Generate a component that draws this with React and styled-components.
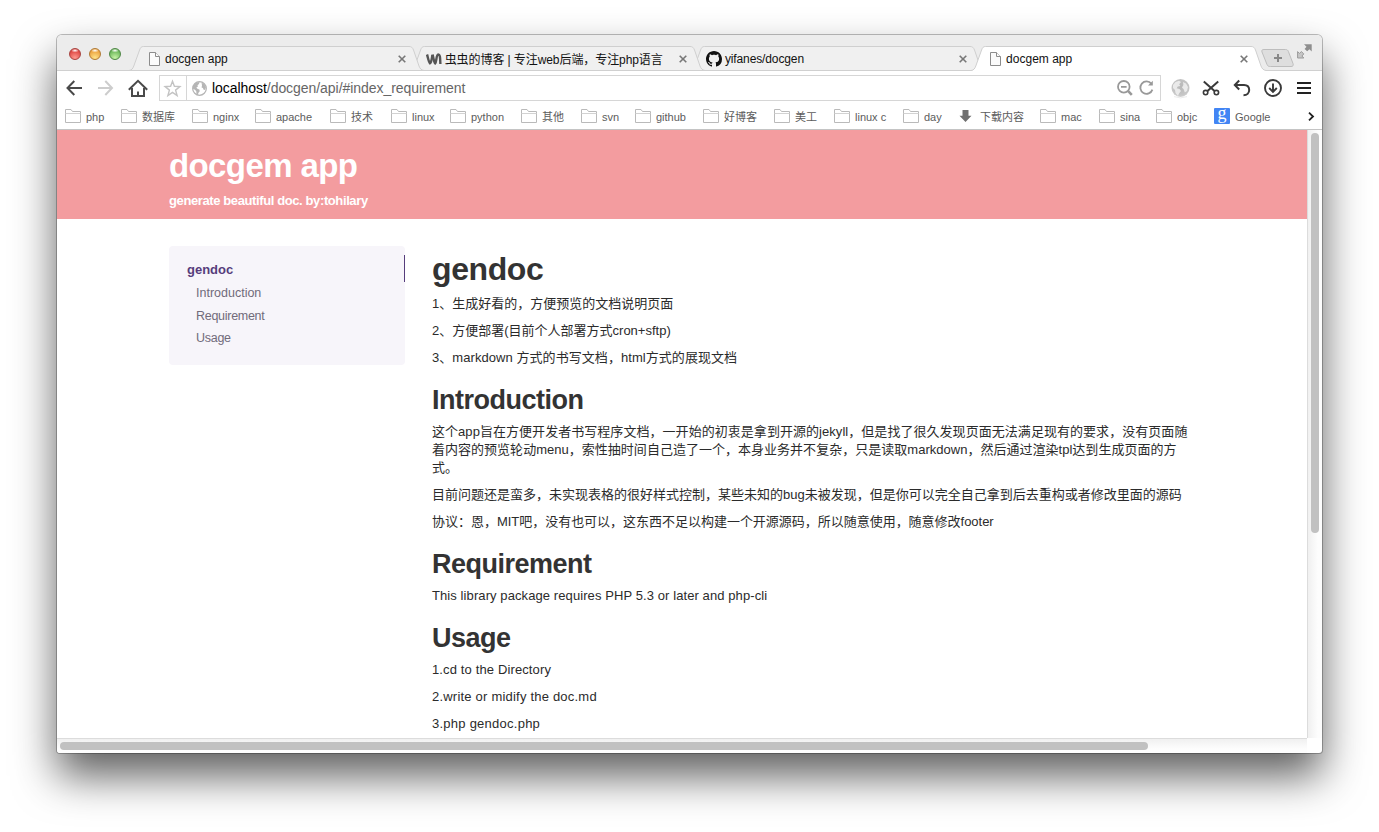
import React from "react";
import styled, { createGlobalStyle } from "styled-components";

const Global = createGlobalStyle`
  html, body { margin: 0; padding: 0; background: #fff; }
  body { width: 1379px; height: 832px; overflow: hidden; font-family: "Liberation Sans", "Noto Sans CJK SC", sans-serif; }
  * { box-sizing: border-box; }
  svg { display: block; flex: none; overflow: visible; }
  h1, h2, p { margin: 0; }
`;

const Desktop = styled.div`
  width: 1379px;
  height: 832px;
  padding: 35px 57px 79px;
`;

const Window = styled.div`
  width: 1265px;
  height: 718px;
  display: flex;
  flex-direction: column;
  background: #fff;
  border-radius: 5px 5px 3px 3px;
  overflow: hidden;
  box-shadow: 0 0 0 1px rgba(0, 0, 0, 0.25), 0 23px 43px rgba(0, 0, 0, 0.63);
`;

const TabStrip = styled.div`
  height: 36px;
  flex: none;
  display: flex;
  align-items: flex-end;
  padding-left: 12px;
  background: #ececec;
  border-bottom: 1px solid #d0d0d0;
`;

const Lights = styled.div`
  display: flex;
  gap: 8px;
  width: 61px;
  padding-bottom: 10px;
`;

const Light = styled.span`
  width: 12px;
  height: 12px;
  border-radius: 50%;
  border: 1px solid ${(p) => p.$edge};
  background: radial-gradient(ellipse 4px 2px at 50% 15%, #fff, transparent),
    radial-gradient(circle at 50% 90%, ${(p) => p.$glow}, ${(p) => p.$core} 75%);
`;

const TabBox = styled.div`
  position: relative;
  z-index: ${(p) => p.$z};
  width: 294px;
  height: 25px;
  flex: none;
  margin: 0 -13.3px -1px 0;
  display: flex;
  align-items: center;
  padding: 0 18px 0 ${(p) => p.$pad}px;
  font-size: 12px;
  color: #111;
  white-space: nowrap;
`;

const TabShape = styled.svg`
  position: absolute;
  left: 0;
  top: 0;
  z-index: -1;
`;

const TabIcon = styled.span`
  width: ${(p) => p.$w}px;
  display: flex;
  align-items: center;
`;

const TabTitle = styled.span`
  flex: 1;
  letter-spacing: ${(p) => p.$ls || 0}px;
`;

const NewTab = styled.div`
  margin: 0 0 3px 8px;
`;

const Expand = styled.div`
  margin: 0 0 11px 3px;
`;

const Toolbar = styled.div`
  height: 34px;
  flex: none;
  display: flex;
  align-items: center;
  padding-left: 9px;
`;

const Tool = styled.div`
  width: ${(p) => p.$w}px;
  flex: none;
`;

const Omnibox = styled.div`
  width: 1002px;
  height: 26px;
  display: flex;
  align-items: center;
  border: 1px solid #d6d6d6;
  margin-right: 10px;
`;

const StarCell = styled.div`
  width: 27px;
  height: 24px;
  display: flex;
  align-items: center;
  padding-left: 4px;
  border-right: 1px solid #d6d6d6;
  margin-right: 5px;
`;

const Url = styled.span`
  flex: 1;
  margin-left: 5px;
  font-size: 14px;
  letter-spacing: -0.05px;
  color: #666;
  b { font-weight: 400; color: #000; }
`;

const OmniTools = styled.div`
  display: flex;
  gap: 6px;
  padding-right: 6px;
`;

const Bookmarks = styled.div`
  height: 25px;
  flex: none;
  display: flex;
  align-items: center;
  padding: 0 0 2px 8px;
  border-bottom: 1px solid #c4c4c4;
`;

const Bookmark = styled.div`
  width: ${(p) => p.$w}px;
  flex: none;
  display: flex;
  align-items: center;
  font-size: 11px;
  color: #5c5c5c;
  white-space: nowrap;
`;

const BookmarkIcon = styled.span`
  width: 21px;
  height: 16px;
  display: flex;
  align-items: center;
`;

const BookmarkLabel = styled.span`
  line-height: 16px;
  padding-top: 2px;
`;

const GoogleBadge = styled.span`
  width: 16px;
  height: 16px;
  border-radius: 1px;
  background: #4285f4;
  color: #fff;
  font: 18px/11px "Liberation Serif", serif;
  text-align: center;
`;

const Body = styled.div`
  flex: 1;
  display: flex;
  min-height: 0;
`;

const Page = styled.div`
  width: 1250px;
  display: flex;
  flex-direction: column;
  overflow: hidden;
`;

const Banner = styled.header`
  height: 89px;
  flex: none;
  padding: 18px 0 0 112px;
  background: #f39c9f;
  color: #fff;
`;

const SiteTitle = styled.h1`
  font-size: 33px;
  line-height: 36px;
  letter-spacing: -0.6px;
`;

const Tagline = styled.p`
  margin-top: 8px;
  font-size: 13px;
  line-height: 18px;
  font-weight: 700;
  letter-spacing: -0.39px;
`;

const Columns = styled.div`
  display: flex;
  padding: 27px 0 0 112px;
`;

const Sidebar = styled.nav`
  width: 236px;
  height: 119px;
  padding-top: 9px;
  background: #f7f5fa;
  border-radius: 4px;
  margin-right: 27px;
`;

const NavHead = styled.div`
  height: 27px;
  line-height: 30px;
  padding-left: 18px;
  border-right: 1px solid #563d7c;
  color: #563d7c;
  font-size: 13px;
  font-weight: 700;
`;

const NavItem = styled.div`
  height: 22.5px;
  line-height: 22px;
  padding-left: 27px;
  color: #716b7a;
  font-size: 12.5px;
  letter-spacing: ${(p) => p.$ls}px;
`;

const Article = styled.article`
  width: 760px;
  padding-top: 3px;
  color: #2b2b2b;
`;

const H1 = styled.h1`
  font-size: 32px;
  line-height: 40px;
  letter-spacing: -0.4px;
  margin-bottom: 6px;
  color: #333;
`;

const H2 = styled.h2`
  font-size: 27px;
  line-height: 32px;
  letter-spacing: -0.5px;
  padding: 8px 0 7px;
  color: #333;
`;

const P = styled.p`
  font-size: 13px;
  line-height: 18px;
  margin-bottom: 9px;
  white-space: nowrap;
  letter-spacing: ${(p) => p.$ls || 0}px;
`;

const Line = styled.span`
  display: block;
  height: 18px;
  letter-spacing: ${(p) => p.$ls || 0}px;
`;

const VBar = styled.div`
  width: 15px;
  padding: 3px 3px 0;
  background: linear-gradient(90deg, #f0f0f0, #fdfdfd 70%);
  border-left: 1px solid #dcdcdc;
`;

const HBar = styled.div`
  width: 1250px;
  height: 15px;
  flex: none;
  padding: 3px 3px 0;
  background: linear-gradient(#f0f0f0, #fdfdfd 70%);
  border-top: 1px solid #dcdcdc;
`;

const Thumb = styled.div`
  width: ${(p) => p.$w}px;
  height: ${(p) => p.$h}px;
  border-radius: 4px;
  background: #c1c1c1;
`;

const PageIcon = () => (
  <svg width="11" height="14" viewBox="0 0 11 14" fill="#fbfbfb" stroke="#8c8c8c">
    <path d="M.5.5H6.5L10.5 4.5V13.5H.5Z" />
    <path d="M6.5.5V4.5H10.5" />
  </svg>
);

const BlogIcon = () => (
  <svg width="16" height="12" viewBox="0 0 16 12" fill="none" stroke="#555" strokeWidth="2.4">
    <path d="M1 1.5C2 4.5 2.6 9 4 10.3C5.4 9.5 6 5 6.4 2" />
    <path d="M6.6 1.5C7.4 4.5 7.8 9 9.2 10.3C10.6 9 10.2 1.6 12.2 1.5C14.6 1.5 14 6 14.4 11" />
  </svg>
);

const GithubIcon = () => (
  <svg width="16" height="16" viewBox="0 0 16 16" fill="#111">
    <path d="M8 0C3.58 0 0 3.58 0 8c0 3.54 2.29 6.53 5.47 7.59.4.07.55-.17.55-.38 0-.19-.01-.82-.01-1.49-2.01.37-2.53-.49-2.69-.94-.09-.23-.48-.94-.82-1.13-.28-.15-.68-.52-.01-.53.63-.01 1.08.58 1.23.82.72 1.21 1.87.87 2.33.66.07-.52.28-.87.51-1.07-1.78-.2-3.64-.89-3.64-3.95 0-.87.31-1.59.82-2.15-.08-.2-.36-1.02.08-2.12 0 0 .67-.21 2.2.82.64-.18 1.32-.27 2-.27s1.36.09 2 .27c1.53-1.04 2.2-.82 2.2-.82.44 1.1.16 1.92.08 2.12.51.56.82 1.27.82 2.15 0 3.07-1.87 3.75-3.65 3.95.29.25.54.73.54 1.48 0 1.07-.01 1.93-.01 2.2 0 .21.15.46.55.38A8 8 0 0 0 16 8c0-4.42-3.58-8-8-8Z" />
  </svg>
);

const CloseIcon = () => (
  <svg width="8" height="8" viewBox="0 0 8 8" stroke="#777" strokeWidth="1.6">
    <path d="M.7.7L7.3 7.3M7.3.7L.7 7.3" />
  </svg>
);

const FolderIcon = () => (
  <svg width="16" height="14" viewBox="0 0 16 14" fill="#fff" stroke="#bababa">
    <path d="M.5 13.5V.5H6L7.5 2.5H15.5V13.5Z" />
    <path d="M.5 4.5H15.5" stroke="#d2d2d2" />
  </svg>
);

const DownIcon = () => (
  <svg width="14" height="14" viewBox="0 0 14 14" fill="#707070">
    <path d="M3.5 1H9.5V6.8H12.5L6.5 13L.5 6.8H3.5Z" />
  </svg>
);

const GlobeIcon = () => (
  <svg width="15" height="15" viewBox="0 0 15 15">
    <circle cx="7.5" cy="7.5" r="6.8" fill="#fff" stroke="#b5b5b5" strokeWidth="1.3" />
    <path fill="#b5b5b5" d="M1 5L4 1.6L7.6 1L7 3L5.5 4.2L6 5.5L4.5 6.2L5 7.6L7.6 8.8L7.6 10.5L6.3 12L6 14L4.5 13L4.2 10L2.5 8.5L1 7.8ZM9.5 1.6L12.5 3.6L13.9 6.5L12.8 9L11.4 8.4L11 7L9.6 6.4L10 4.4Z" />
  </svg>
);

const ShinyGlobe = () => (
  <svg width="19" height="19" viewBox="0 0 19 19">
    <defs>
      <radialGradient id="shine" cx=".5" cy=".4" r=".62">
        <stop offset="0" stopColor="#b8b8b8" />
        <stop offset=".8" stopColor="#c6c6c6" />
        <stop offset="1" stopColor="#d6d6d6" />
      </radialGradient>
    </defs>
    <circle cx="9.5" cy="9" r="9" fill="url(#shine)" />
    <path fill="#f1f1f1" d="M2 6L4.5 3L8 1.8L10 3L8.2 5.2L9.4 7L6.8 7.4L5.6 9.2L8.5 10L10 12L8 14.5L7 17L4.5 14L4 11L2 9ZM12 3L15 4.5L17 8L16 12L13.8 13.4L12.8 10.5L11 8.5L12.4 6Z" opacity=".85" />
    <path d="M3 17.6Q9.5 20.2 16 17.6" fill="none" stroke="#ececec" />
  </svg>
);

const StarIcon = () => (
  <svg width="17" height="17" viewBox="0 0 17 17" fill="none" stroke="#c3c3c3" strokeWidth="1.4">
    <path d="M8.5 1.3L10.4 6.3L15.9 6.6L11.6 10.1L13.1 15.5L8.5 12.4L3.9 15.5L5.4 10.1L1.1 6.6L6.6 6.3Z" />
  </svg>
);

const tabs = [
  { title: "docgen app", icon: <PageIcon />, w: 16, pad: 19, z: 4 },
  { title: "虫虫的博客 | 专注web后端，专注php语言", icon: <BlogIcon />, w: 19, pad: 15, z: 3, ls: -0.08 },
  { title: "yifanes/docgen", icon: <GithubIcon />, w: 18.5, pad: 15, z: 2, ls: -0.12 },
  { title: "docgem app", icon: <PageIcon />, w: 16, pad: 18, z: 5, active: true },
];

const bookmarks = [
  ["php", 56], ["数据库", 71], ["nginx", 63], ["apache", 75], ["技术", 61], ["linux", 59],
  ["python", 71], ["其他", 60], ["svn", 54], ["github", 68], ["好博客", 71], ["美工", 60],
  ["linux c", 69], ["day", 56], ["下载内容", 81, "down"], ["mac", 59], ["sina", 57],
  ["objc", 58], ["Google", 94, "google"],
];

const bookmarkIcons = { down: <DownIcon />, google: <GoogleBadge>g</GoogleBadge> };

function Tab({ title, icon, w, z, pad, ls, active }) {
  return (
    <TabBox $z={z} $pad={pad}>
      <TabShape width="294" height="25" viewBox="0 0 294 25">
        <path
          d="M-1 25C2 24.3 2.8 22.5 3.8 20L9.6 4C10.6 1.5 11.3.5 13.5 .5H279C281.5 .5 282.5 1.5 283.5 4L289 20C290 22.5 291 24 294 24.5V25Z"
          fill={active ? "#fff" : "#f0f0f0"}
        />
        <path
          d="M-1 24.5C2 24 2.8 22.5 3.8 20L9.6 4C10.6 1.5 11.3.5 13.5 .5H279C281.5 .5 282.5 1.5 283.5 4L289 20C290 22.5 291 24 294 24.5"
          fill="none"
          stroke="#cfcfcf"
        />
        {!active && <path d="M0 24.5H294" stroke="#d0d0d0" />}
      </TabShape>
      <TabIcon $w={w}>{icon}</TabIcon>
      <TabTitle $ls={ls}>{title}</TabTitle>
      <CloseIcon />
    </TabBox>
  );
}

export default function App() {
  return (
    <Desktop>
      <Global />
      <Window>
        <TabStrip>
          <Lights>
            <Light $edge="#a8433f" $core="#dd4440" $glow="#ff9a90" />
            <Light $edge="#b07a34" $core="#eba03c" $glow="#ffe48a" />
            <Light $edge="#4e8745" $core="#68b457" $glow="#c8f5a8" />
          </Lights>
          {tabs.map((t, i) => (
            <Tab key={i} {...t} />
          ))}
          <NewTab>
            <svg width="33" height="18" viewBox="0 0 33 18">
              <path d="M3 .5H24.5C26 .5 26.8 1 27.4 2.5L32 14.5C32.7 16.5 32 17.5 30 17.5H9.5C7.5 17.5 6.6 17 6 15.5L1 3C.4 1.4 1 .5 3 .5Z" fill="#dedede" stroke="#bdbdbd" />
              <path d="M17 5V13M13 9H21" stroke="#888" strokeWidth="2" />
            </svg>
          </NewTab>
          <Expand>
            <svg width="15" height="15" viewBox="0 0 15 15">
              <path fill="#8e8e8e" d="M7 .3H14.7V7.5L12.4 5.3L10.2 7.3L7.6 4.9L9.5 2.7Z" />
              <path stroke="#9a9a9a" fill="#c6c6c6" d="M.6 14V7.6L2.4 9.4L4.4 7.6L6.8 9.9L4.9 12L6.8 14Z" />
            </svg>
          </Expand>
        </TabStrip>

        <Toolbar>
          <Tool $w={31}>
            <svg width="16" height="16" viewBox="0 0 16 16" fill="none" stroke="#4a4a4a" strokeWidth="2">
              <path d="M8.3 1L1.5 8L8.3 15M1.5 8H16" />
            </svg>
          </Tool>
          <Tool $w={31}>
            <svg width="16" height="16" viewBox="0 0 16 16" fill="none" stroke="#cdcdcd" strokeWidth="2">
              <path d="M8.3 1L15 8L8.3 15M15 8H1" />
            </svg>
          </Tool>
          <Tool $w={31}>
            <svg width="20" height="18" viewBox="0 0 20 18" fill="none" stroke="#4a4a4a" strokeWidth="2">
              <path d="M.8 10.8L10 1.8L19.2 10.8M4 9V17H16V9" />
              <path d="M10 17V12.5" />
            </svg>
          </Tool>
          <Omnibox>
            <StarCell><StarIcon /></StarCell>
            <GlobeIcon />
            <Url><b>localhost</b>/docgen/api/#index_requirement</Url>
            <OmniTools>
              <svg width="16" height="16" viewBox="0 0 16 16" fill="none" stroke="#999" strokeWidth="1.8">
                <circle cx="6.8" cy="6.8" r="5.8" />
                <path d="M4 6.8H9.6" />
                <path d="M11.2 11.2L14.8 14.8" strokeWidth="2.6" />
              </svg>
              <svg width="15" height="16" viewBox="0 0 15 16" fill="none" stroke="#999" strokeWidth="1.8">
                <path d="M12.4 3.8A6.2 6.2 0 1 0 13.4 9.6" />
                <path d="M9 5.6H13.8V.8Z" fill="#999" stroke="none" />
              </svg>
            </OmniTools>
          </Omnibox>
          <Tool $w={31}><ShinyGlobe /></Tool>
          <Tool $w={31}>
            <svg width="18" height="18" viewBox="0 0 18 18" fill="none" stroke="#3a3a3a" strokeWidth="2">
              <path d="M1.8 2.5L12.8 12.2M16.2 2.5L5.2 12.2" />
              <circle cx="3.6" cy="13.6" r="2.2" strokeWidth="1.6" />
              <circle cx="14.4" cy="13.6" r="2.2" strokeWidth="1.6" />
            </svg>
          </Tool>
          <Tool $w={31}>
            <svg width="18" height="18" viewBox="0 0 18 18" fill="none" stroke="#3a3a3a" strokeWidth="2">
              <path d="M6.2 1.5L1.8 6L6.2 10.5M2 6H11C14.5 6 16.2 8 16.2 11C16.2 14 14 16.2 10.5 16.2" />
            </svg>
          </Tool>
          <Tool $w={33}>
            <svg width="18" height="18" viewBox="0 0 18 18" fill="none" stroke="#3a3a3a" strokeWidth="1.9">
              <circle cx="9" cy="9" r="8" />
              <path d="M9 4.4V12.5M5.2 9L9 12.8L12.8 9" />
            </svg>
          </Tool>
          <svg width="14" height="14" viewBox="0 0 14 14" stroke="#222" strokeWidth="2">
            <path d="M0 2H14M0 7H14M0 12H14" />
          </svg>
        </Toolbar>

        <Bookmarks>
          {bookmarks.map(([label, w, icon]) => (
            <Bookmark key={label} $w={w}>
              <BookmarkIcon>{icon ? bookmarkIcons[icon] : <FolderIcon />}</BookmarkIcon>
              <BookmarkLabel>{label}</BookmarkLabel>
            </Bookmark>
          ))}
          <svg width="6" height="9" viewBox="0 0 6 9" fill="none" stroke="#222" strokeWidth="1.8">
            <path d="M1 .7L5 4.5L1 8.3" />
          </svg>
        </Bookmarks>

        <Body>
          <Page>
            <Banner>
              <SiteTitle>docgem app</SiteTitle>
              <Tagline>generate beautiful doc. by:tohilary</Tagline>
            </Banner>
            <Columns>
              <Sidebar>
                <NavHead>gendoc</NavHead>
                <NavItem $ls={0}>Introduction</NavItem>
                <NavItem $ls={-0.28}>Requirement</NavItem>
                <NavItem $ls={-0.28}>Usage</NavItem>
              </Sidebar>
              <Article>
                <H1>gendoc</H1>
                <P>1、生成好看的，方便预览的文档说明页面</P>
                <P>2、方便部署(目前个人部署方式cron+sftp)</P>
                <P $ls={0.06}>3、markdown 方式的书写文档，html方式的展现文档</P>
                <H2>Introduction</H2>
                <P>
                  <Line $ls={0.045}>这个app旨在方便开发者书写程序文档，一开始的初衷是拿到开源的jekyll，但是找了很久发现页面无法满足现有的要求，没有页面随</Line>
                  <Line $ls={0.02}>着内容的预览轮动menu，索性抽时间自己造了一个，本身业务并不复杂，只是读取markdown，然后通过渲染tpl达到生成页面的方</Line>
                  <Line>式。</Line>
                </P>
                <P>目前问题还是蛮多，未实现表格的很好样式控制，某些未知的bug未被发现，但是你可以完全自己拿到后去重构或者修改里面的源码</P>
                <P $ls={-0.02}>协议：恩，MIT吧，没有也可以，这东西不足以构建一个开源源码，所以随意使用，随意修改footer</P>
                <H2>Requirement</H2>
                <P $ls={0.09}>This library package requires PHP 5.3 or later and php-cli</P>
                <H2>Usage</H2>
                <P $ls={0.13}>1.cd to the Directory</P>
                <P $ls={0.21}>2.write or midify the doc.md</P>
                <P $ls={0.25}>3.php gendoc.php</P>
              </Article>
            </Columns>
          </Page>
          <VBar><Thumb $w={8} $h={400} /></VBar>
        </Body>
        <HBar><Thumb $w={1088} $h={8} /></HBar>
      </Window>
    </Desktop>
  );
}
